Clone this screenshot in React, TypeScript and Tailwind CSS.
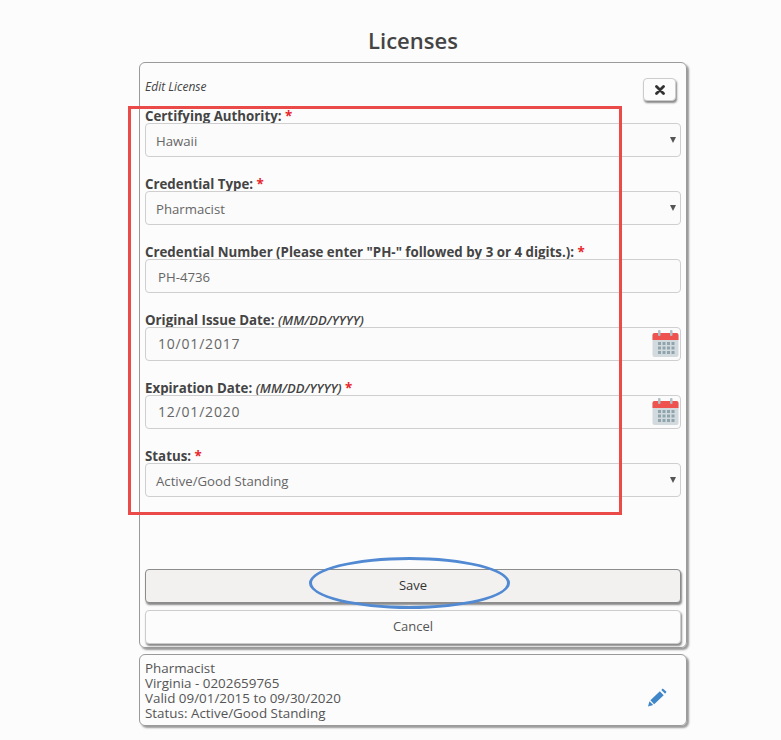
import { ReactNode } from 'react';

const FONT = "font-['Open_Sans',sans-serif]";

function Req() {
  return <span className="text-[#e8262a]"> *</span>;
}

function Field({ label, children }: { label: ReactNode; children: ReactNode }) {
  return (
    <div className="mb-[19px]">
      <div className="h-[15px] text-[13.3px] leading-[17px] font-bold whitespace-nowrap text-[#444]">{label}</div>
      {children}
    </div>
  );
}

function Box({ children, spaced }: { children: ReactNode; spaced?: boolean }) {
  return (
    <div
      className={`relative flex h-[34px] items-center rounded-[4px] border border-[#cfcfcf] bg-[#fbfbfb] text-[#666] ${
        spaced ? 'pl-[12px] text-[14px] tracking-[0.8px]' : 'pt-[4px] pl-[10px] text-[13.2px]'
      }`}
    >
      {children}
    </div>
  );
}

function Select({ value }: { value: string }) {
  return (
    <Box>
      {value}
      <span className="absolute right-[4px] top-[13px] h-0 w-0 border-x-[3px] border-t-[6px] border-x-transparent border-t-[#555]" />
    </Box>
  );
}

function CalendarIcon() {
  return (
    <svg className="absolute right-[1px] top-[2px]" width="27" height="27" viewBox="0 0 27 27">
      <rect x="0.5" y="3" width="26" height="24" rx="2" fill="#d3dade" />
      <path d="M0.5 10V5a2 2 0 0 1 2-2h22a2 2 0 0 1 2 2v5z" fill="#ef5350" />
      <rect x="6" y="0" width="2.5" height="6" rx="1" fill="#b0bec5" />
      <rect x="18" y="0" width="2.5" height="6" rx="1" fill="#b0bec5" />
      {[12, 16.5, 21].map((y) =>
        [6, 10.5, 15, 19.5].map((x) => (
          <rect key={`${x}-${y}`} x={x} y={y} width="3" height="3" fill="#90a4ae" />
        )),
      )}
    </svg>
  );
}

function DateField({ value }: { value: string }) {
  return (
    <Box spaced>
      <span className="-mt-[2px]">{value}</span>
      <CalendarIcon />
    </Box>
  );
}

export default function App() {
  return (
    <div className={`${FONT} relative h-[740px] overflow-hidden bg-[#fcfcfc] text-[#444]`}>
      <div className="ml-[139px] w-[548px]">
        <h1 className="h-[62px] pt-[21px] text-center text-[22px] leading-[38px] font-semibold text-[#444]">
          Licenses
        </h1>

        <div className="h-[586px] rounded-[6px] border border-[#9a9a9a] px-[5px] shadow-[2px_2px_2px_#999]">
          <div className="flex h-[45px] items-start justify-between pr-[5px]">
            <span className="pt-[16px] text-[12px] leading-[16px] text-[#444] italic">Edit License</span>
            <button className="mt-[15px] flex h-[23px] w-[33px] items-center justify-center rounded-[4px] border border-[#ccc] bg-[#fcfcfc] shadow-[1px_2px_2px_#888]">
              <svg width="10" height="10" viewBox="0 0 10 10">
                <path d="M1.5 1.5l7 7M8.5 1.5l-7 7" stroke="#333" strokeWidth="2.8" strokeLinecap="round" />
              </svg>
            </button>
          </div>

          <Field label={<>Certifying Authority:<Req /></>}>
            <Select value="Hawaii" />
          </Field>
          <Field label={<>Credential Type:<Req /></>}>
            <Select value="Pharmacist" />
          </Field>
          <Field label={<>Credential Number (Please enter "PH-" followed by 3 or 4 digits.):<Req /></>}>
            <Box>
              <span className="pl-[2px]">PH-4736</span>
            </Box>
          </Field>
          <Field
            label={
              <>
                Original Issue Date: <em className="text-[13px] font-semibold">(MM/DD/YYYY)</em>
              </>
            }
          >
            <DateField value="10/01/2017" />
          </Field>
          <Field
            label={
              <>
                Expiration Date: <em className="text-[13px] font-semibold">(MM/DD/YYYY)</em>
                <Req />
              </>
            }
          >
            <DateField value="12/01/2020" />
          </Field>
          <Field label={<>Status:<Req /></>}>
            <Select value="Active/Good Standing" />
          </Field>

          <div className="mt-[72px] flex flex-col gap-[7px]">
            <button className="h-[34px] rounded-[4px] border border-[#8c8c8c] bg-[#f2f1f0] text-[13px] text-[#333] shadow-[1px_2px_2px_#888]">
              Save
            </button>
            <button className="h-[34px] rounded-[4px] border border-[#ccc] bg-[#fcfcfc] text-[13px] text-[#555] shadow-[1px_2px_2px_#888]">
              Cancel
            </button>
          </div>
        </div>

        <div className="relative mt-[6px] h-[72px] rounded-[6px] border border-[#9a9a9a] px-[5px] pt-[6px] text-[13.4px] leading-[15px] text-[#555] shadow-[2px_2px_2px_#999]">
          <div>Pharmacist</div>
          <div>Virginia - 0202659765</div>
          <div>Valid 09/01/2015 to 09/30/2020</div>
          <div>Status: Active/Good Standing</div>
          <svg className="absolute right-[19px] top-[33px]" width="19" height="19" viewBox="0 0 20 19">
            <path d="M0 19l1.5-5.5 4 4z M2.5 12.5L12.5 3l4 4L6.5 16.5z M14 1.5l1.5-1.5 4 3.5-1.5 2z" fill="#3f87c9" />
          </svg>
        </div>
      </div>

      {/* Annotations over the screenshot */}
      <div className="absolute left-[128px] top-[106px] h-[409px] w-[494px] border-[3px] border-[#ea4b48]" />
      <div className="absolute left-[309px] top-[557px] h-[52px] w-[201px] rounded-[50%] border-[3px] border-[#5189d3]" />
    </div>
  );
}
